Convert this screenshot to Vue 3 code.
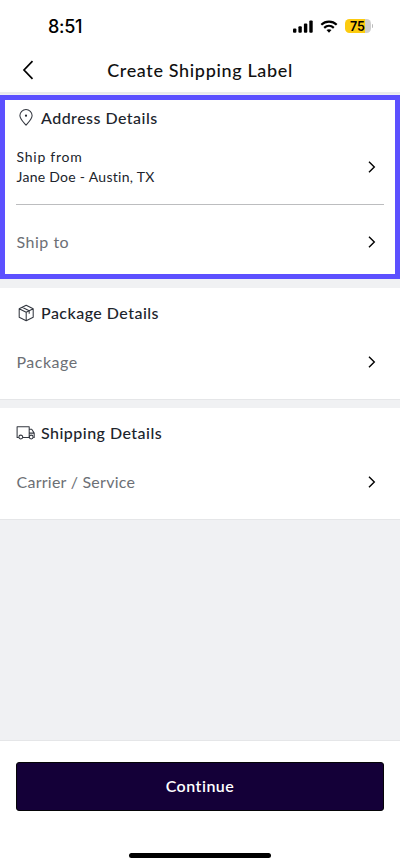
<script setup>
const sections = [
  {
    title: 'Address Details',
    icon: 'pin',
    active: true,
    rows: [
      { id: 'from', label: 'Ship from', value: 'Jane Doe - Austin, TX' },
      { id: 'to', label: 'Ship to' },
    ],
  },
  { title: 'Package Details', icon: 'box', rows: [{ id: 'package', label: 'Package' }] },
  { title: 'Shipping Details', icon: 'truck', rows: [{ id: 'carrier', label: 'Carrier / Service' }] },
]
</script>

<template>
  <div class="screen">
    <div class="status">
      <span class="time">8:51</span>
      <div class="indicators">
        <svg class="signal" width="20" height="13" viewBox="0 0 20 13">
          <rect x="0" y="8.6" width="3.4" height="4.2" rx="1" />
          <rect x="5.4" y="6.2" width="3.4" height="6.6" rx="1" />
          <rect x="10.9" y="3.4" width="3.4" height="9.4" rx="1" />
          <rect x="16.3" y="0.4" width="3.4" height="12.4" rx="1" />
        </svg>
        <svg class="wifi" width="18" height="13" viewBox="0 0 18 13" fill="none" stroke="#000" stroke-width="2.2">
          <path d="M1.3 4.7C5.6.6 12.4.6 16.7 4.7" />
          <path d="M4.2 7.9C7 5.3 11 5.3 13.8 7.9" />
          <path d="M6.5 10.1Q9 8.2 11.5 10.1L9 12.7Z" fill="#000" stroke="none" />
        </svg>
        <div class="battery">75</div>
        <i class="battery-tip"></i>
      </div>
    </div>

    <header class="header">
      <svg class="back" width="12" height="20" viewBox="0 0 12 20" fill="none" stroke="#000" stroke-width="1.7">
        <path d="M10.5 1.2L2 10l8.5 8.8" />
      </svg>
      <h1><span class="t-title">Create Shipping Label</span></h1>
    </header>

    <main class="content">
      <section v-for="s in sections" :key="s.title" class="card" :class="{ active: s.active }">
        <h2>
          <span class="icon">
            <svg v-if="s.icon === 'pin'" width="20" height="20" viewBox="0 0 20 20">
              <path d="M10 17.2C8.4 15.2 3.9 11.4 3.9 7.6a6.1 6.1 0 0 1 12.2 0c0 3.8-4.5 7.6-6.1 9.6Z" />
              <circle cx="10" cy="7.7" r="1.1" fill="#20242c" stroke="none" />
            </svg>
            <svg v-else-if="s.icon === 'box'" width="20" height="20" viewBox="0 0 20 20">
              <path d="M10.2 2.2l7 3.5v8.5l-7 3.6-7-3.6V5.7zM3.2 5.7l7 3.5 7-3.5M10.2 9.2v8.6M6.2 4.2l7 3.5v3" />
            </svg>
            <svg v-else width="20" height="20" viewBox="0 0 20 20">
              <path d="M2.8 14.4H1.1V3.8h12.1v10.6H6.8M13.2 6.2h2.5l2.5 3.9v4.3h-1M13.2 10.1h5" />
              <circle cx="4.8" cy="14" r="1.9" />
              <circle cx="15.2" cy="14" r="1.9" />
            </svg>
          </span>
          <span :class="`t-${s.icon}`">{{ s.title }}</span>
        </h2>
        <div v-for="r in s.rows" :key="r.id" class="row" :class="{ filled: r.value }">
          <div class="text">
            <div class="label"><span :class="`t-${r.id}`">{{ r.label }}</span></div>
            <div v-if="r.value" class="value"><span class="t-value">{{ r.value }}</span></div>
          </div>
          <svg class="chevron" width="8" height="12" viewBox="0 0 8 12" fill="none" stroke="#000" stroke-width="1.4">
            <path d="M1 .8L6.3 6 1 11.2" />
          </svg>
        </div>
      </section>
    </main>

    <footer class="footer">
      <button><span class="t-button">Continue</span></button>
      <div class="home"></div>
    </footer>
  </div>
</template>

<style>
body { margin: 0; background: #fff; }
</style>

<style scoped>
.screen {
  width: 400px;
  height: 866px;
  display: flex;
  flex-direction: column;
  overflow: hidden;
  background: #fff;
  color: #20242c;
  font-family: Lato, "Open Sans", sans-serif;
  font-variant-ligatures: none;
}
h1, h2 { margin: 0; font-weight: 500; }
svg { display: block; flex: none; }
.status {
  height: 50px;
  box-sizing: border-box;
  display: flex;
  justify-content: space-between;
  padding: 16px 27px 0 48px;
  color: #000;
}
.time { font: 500 18px/22px Inter, sans-serif; letter-spacing: -0.3px; }
.indicators { display: flex; align-items: flex-start; padding-top: 3px; }
.signal { margin: 1px 7px 0 0; }
.wifi { margin: 1px 7px 0 0; }
.battery {
  width: 26px;
  height: 14px;
  border-radius: 4.5px;
  background: linear-gradient(90deg, #fccb10 75%, #cfcfcf 75%);
  font: 600 12.5px/15px Inter, sans-serif;
  text-align: center;
  text-indent: -1px;
}
.battery-tip { width: 1px; height: 4px; margin: 5px 0 0 1px; border-radius: 0 1px 1px 0; background: #bbb; }
.header {
  height: 44px;
  box-sizing: border-box;
  display: grid;
  grid-template-columns: 40px 1fr 40px;
  align-items: center;
  padding-bottom: 2px;
  border-bottom: 2px solid #ebebed;
}
.back { margin-left: 22px; }
h1 { text-align: center; font-size: 18px; line-height: 24px; color: #111; }
.content {
  flex: 1;
  display: flex;
  flex-direction: column;
  gap: 9px;
  padding-top: 1px;
  background: #f0f1f3;
}
.card {
  height: 111px;
  box-sizing: border-box;
  padding: 13px 16px 0;
  background: #fff;
  box-shadow: 0 1px #e5e6e8;
}
.card.active {
  height: 184px;
  border: 5px solid #5c50ff;
  padding: 6px 11px 0;
  box-shadow: none;
}
h2 { display: flex; align-items: center; height: 24px; font-size: 16px; line-height: 24px; }
.icon { width: 25px; flex: none; }
.icon svg { fill: none; stroke: #343840; stroke-width: 1.05; stroke-linejoin: round; }
.row { display: flex; align-items: center; justify-content: space-between; height: 74px; padding-right: 8px; }
.card.active .row.filled { border-bottom: 1px solid #bcbdbf; }
.text { padding-left: 0.5px; }
.label { font-size: 16px; line-height: 20px; color: #6c6f75; }
.filled .label, .value { font-size: 14px; line-height: 20px; color: #20242c; }
.footer {
  height: 126px;
  box-sizing: border-box;
  display: flex;
  flex-direction: column;
  align-items: center;
  padding: 21px 16px 0;
  border-top: 1px solid #e5e6e8;
  background: #fff;
}
button {
  width: 368px;
  height: 49px;
  box-sizing: border-box;
  padding: 0 0 2px;
  border: 1.5px solid #050507;
  border-radius: 3px;
  background: #140038;
  color: #fff;
  font: 600 16px/24px Lato, sans-serif;
  font-variant-ligatures: none;
}
.home { width: 142px; height: 5px; margin-top: 42px; border-radius: 3px; background: #000; }
.t-title { letter-spacing: 0.65px; }
.t-pin, .t-box, .t-truck { letter-spacing: 0.47px; }
.t-from { letter-spacing: 0.75px; }
.t-value { letter-spacing: 0.28px; }
.t-to, .t-package { letter-spacing: 0.5px; }
.t-carrier { letter-spacing: 0.25px; }
.t-button { letter-spacing: 0.5px; }
</style>
